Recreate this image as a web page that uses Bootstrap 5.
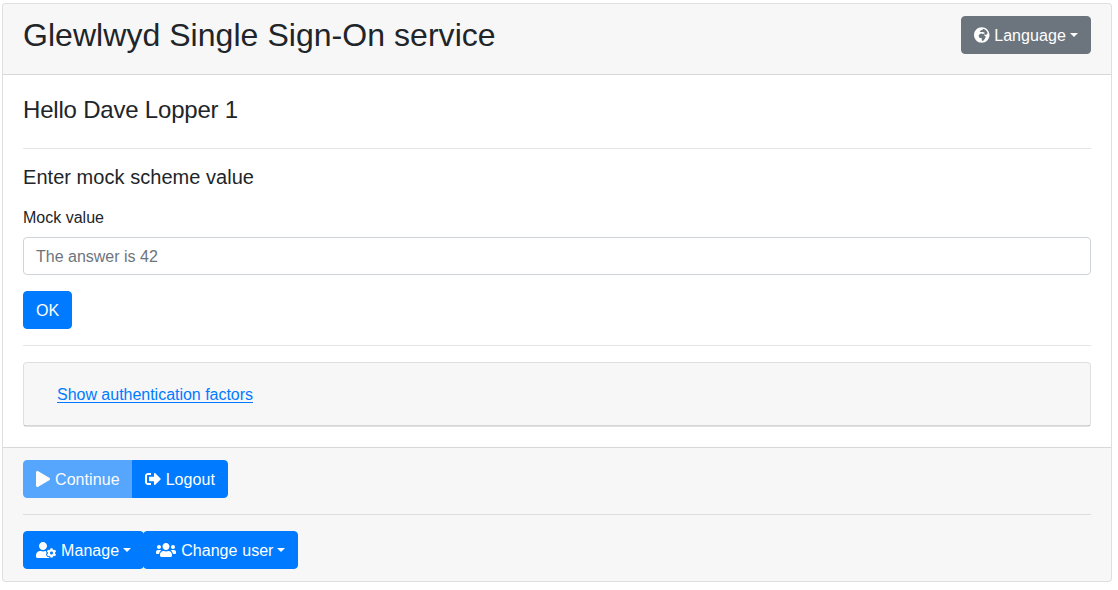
<!DOCTYPE html>
<html lang="en">
<head>
<meta charset="utf-8">
<meta name="viewport" content="width=device-width, initial-scale=1">
<title>Glewlwyd Single Sign-On service</title>
<link href="https://cdn.jsdelivr.net/npm/bootstrap@5.3.0/dist/css/bootstrap.min.css" rel="stylesheet">
<style>
body { font-family: "Liberation Sans", Arial, sans-serif; color: #212529; background: #fff; padding: 3px 6px 0 2px; }
.card { --bs-card-border-color: rgba(0,0,0,.125); --bs-card-border-radius: 4px; --bs-card-inner-border-radius: 3px; --bs-card-cap-bg: rgba(0,0,0,.03); --bs-card-cap-padding-x: 20px; --bs-card-cap-padding-y: 12px; --bs-card-spacer-x: 20px; --bs-card-spacer-y: 20px; }
h2 { font-size: 32px; letter-spacing: .045px; }
h4 { font-size: 24px; letter-spacing: -.2px; padding-top: 1px; margin-bottom: 23px; }
h5 { font-size: 20px; letter-spacing: .04px; }
hr { margin: 16px 0; border-top: 1px solid rgba(0,0,0,.1); opacity: 1; }
label { padding-top: 1px; margin-bottom: 7px; }
.btn { --bs-btn-border-radius: 4px; padding-top: 7px; padding-bottom: 5px; }
.icon-btn { letter-spacing: .07px; word-spacing: .5px; }
.user-btn { letter-spacing: 0; }
.btn-primary { --bs-btn-bg: #007bff; --bs-btn-border-color: #007bff; --bs-btn-hover-bg: #0069d9; --bs-btn-hover-border-color: #0062cc; --bs-btn-disabled-bg: #007bff; --bs-btn-disabled-border-color: #007bff; }
.btn-link { --bs-btn-color: #007bff; --bs-btn-hover-color: #0056b3; letter-spacing: -.02px; text-underline-offset: 2px; }
.form-control { border-color: #ced4da; border-radius: 4px; padding-top: 7px; padding-bottom: 5px; }
.form-control::placeholder { color: #6c757d; }
.glyph { height: 1em; vertical-align: -.125em; fill: currentColor; overflow: visible; }
.join-left { margin-left: -1px; }
</style>
<script src="https://cdn.jsdelivr.net/npm/bootstrap@5.3.0/dist/js/bootstrap.bundle.min.js"></script>
</head>
<body>
<main class="card">
  <header class="card-header d-flex justify-content-between align-items-start">
    <h2 class="mb-2">Glewlwyd Single Sign-On service</h2>
    <div class="dropdown">
      <button class="btn icon-btn btn-secondary dropdown-toggle" type="button" data-bs-toggle="dropdown"><svg class="glyph" viewBox="0 0 496 512" aria-hidden="true"><path d="M248 8C111.03 8 0 119.03 0 256s111.03 248 248 248 248-111.03 248-248S384.97 8 248 8zm160 215.5v6.93c0 5.87-3.32 11.24-8.57 13.86l-15.39 7.7a15.485 15.485 0 0 1-15.53-.97l-18.21-12.14a15.52 15.52 0 0 0-13.5-1.81l-2.65.88c-9.7 3.23-13.66 14.79-7.99 23.3l13.24 19.86c2.87 4.31 7.71 6.9 12.89 6.9h8.21c8.56 0 15.5 6.94 15.5 15.5v11.34c0 3.35-1.09 6.62-3.1 9.3l-18.74 24.98c-1.42 1.9-2.39 4.1-2.83 6.43l-4.3 22.83c-.62 3.29-2.29 6.29-4.76 8.56a159.608 159.608 0 0 0-25 29.16l-13.03 19.55a27.756 27.756 0 0 1-23.09 12.36c-10.51 0-20.12-5.94-24.82-15.34a78.902 78.902 0 0 1-8.33-35.29V367.5c0-8.56-6.94-15.5-15.5-15.5h-25.88c-14.49 0-28.38-5.76-38.63-16a54.659 54.659 0 0 1-16-38.63v-14.06c0-17.19 8.1-33.38 21.85-43.7l27.58-20.69a54.663 54.663 0 0 1 32.78-10.93h.89c8.48 0 16.85 1.97 24.43 5.77l14.72 7.36c3.68 1.84 7.93 2.14 11.83.84l47.31-15.77c6.33-2.11 10.6-8.03 10.6-14.7 0-8.56-6.94-15.5-15.5-15.5h-10.09c-4.11 0-8.05-1.63-10.96-4.54l-6.92-6.92a15.493 15.493 0 0 0-10.96-4.54H199.5c-8.56 0-15.5-6.94-15.5-15.5v-4.4c0-7.11 4.84-13.31 11.74-15.04l14.45-3.61c3.74-.94 7-3.23 9.14-6.44l8.08-12.11c2.87-4.31 7.71-6.9 12.89-6.9h24.21c8.56 0 15.5-6.94 15.5-15.5v-21.7C359.23 71.63 422.86 131.02 441.93 208H423.5c-8.56 0-15.5 6.94-15.5 15.5z"/></svg> Language</button>
    </div>
  </header>
  <div class="card-body">
    <h4>Hello Dave Lopper 1</h4>
    <hr>
    <h5 class="mb-3">Enter mock scheme value</h5>
    <form>
      <div class="mb-3">
        <label class="d-block" for="mock-value">Mock value</label>
        <input class="form-control" type="text" id="mock-value" placeholder="The answer is 42">
      </div>
      <button class="btn btn-primary d-block" type="button">OK</button>
    </form>
    <hr>
    <section class="card">
      <div class="card-header d-flex">
        <button class="btn btn-link" type="button">Show authentication factors</button>
      </div>
    </section>
  </div>
  <footer class="card-footer">
    <div class="btn-group d-flex">
      <button class="btn icon-btn btn-primary flex-grow-0 text-nowrap" type="button" disabled><svg class="glyph" viewBox="0 0 448 512" aria-hidden="true"><path d="M424.4 214.7L72.4 6.6C43.8-10.3 0 6.1 0 47.9V464c0 37.5 40.7 60.1 72.4 41.3l352-208c31.4-18.5 31.5-64.1 0-82.6z"/></svg> Continue</button>
      <button class="btn icon-btn btn-primary flex-grow-0 text-nowrap" type="button"><svg class="glyph" viewBox="0 0 512 512" aria-hidden="true"><path d="M497 273L329 441c-15 15-41 4.5-41-17v-96H152c-13.3 0-24-10.7-24-24v-96c0-13.3 10.7-24 24-24h136V88c0-21.4 25.9-32 41-17l168 168c9.3 9.4 9.3 24.6 0 34zM192 436v-40c0-6.6-5.4-12-12-12H96c-17.7 0-32-14.3-32-32V160c0-17.7 14.3-32 32-32h84c6.6 0 12-5.4 12-12V76c0-6.6-5.4-12-12-12H96c-53 0-96 43-96 96v192c0 53 43 96 96 96h84c6.6 0 12-5.4 12-12z"/></svg> Logout</button>
    </div>
    <hr>
    <div class="d-flex">
      <div class="dropdown">
        <button class="btn icon-btn btn-primary dropdown-toggle" type="button" data-bs-toggle="dropdown"><svg class="glyph" viewBox="0 0 640 512" aria-hidden="true"><path d="M610.5 373.3c2.6-14.1 2.6-28.5 0-42.6l25.8-14.9c3-1.7 4.3-5.2 3.3-8.5-6.7-21.6-18.2-41.2-33.2-57.4-2.3-2.5-6-3.1-9-1.4l-25.8 14.9c-10.9-9.3-23.4-16.5-36.9-21.3v-29.8c0-3.4-2.4-6.4-5.7-7.1-22.3-5-45-4.8-66.2 0-3.3.7-5.7 3.7-5.7 7.1v29.8c-13.5 4.8-26 12-36.9 21.3l-25.8-14.9c-2.9-1.7-6.7-1.1-9 1.4-15 16.2-26.5 35.8-33.2 57.4-1 3.3.4 6.8 3.3 8.5l25.8 14.9c-2.6 14.1-2.6 28.5 0 42.6l-25.8 14.9c-3 1.7-4.3 5.2-3.3 8.5 6.7 21.6 18.2 41.1 33.2 57.4 2.3 2.5 6 3.1 9 1.4l25.8-14.9c10.9 9.3 23.4 16.5 36.9 21.3v29.8c0 3.4 2.4 6.4 5.7 7.1 22.3 5 45 4.8 66.2 0 3.3-.7 5.7-3.7 5.7-7.1v-29.8c13.5-4.8 26-12 36.9-21.3l25.8 14.9c2.9 1.7 6.7 1.1 9-1.4 15-16.2 26.5-35.8 33.2-57.4 1-3.3-.4-6.8-3.3-8.5l-25.8-14.9zM496 400.5c-26.8 0-48.5-21.8-48.5-48.5s21.8-48.5 48.5-48.5 48.5 21.8 48.5 48.5-21.7 48.5-48.5 48.5zM224 256c70.7 0 128-57.3 128-128S294.7 0 224 0 96 57.3 96 128s57.3 128 128 128zm201.2 226.5c-2.3-1.2-4.6-2.6-6.8-3.9l-7.9 4.6c-6 3.4-12.8 5.3-19.6 5.3-10.9 0-21.4-4.6-28.9-12.6-18.3-19.8-32.3-43.9-40.2-69.6-5.5-17.7 1.9-36.4 17.9-45.7l7.9-4.6c-.1-2.6-.1-5.2 0-7.8l-7.9-4.6c-16-9.2-23.4-28-17.9-45.7.9-2.9 2.2-5.8 3.2-8.7-3.8-.3-7.5-1.2-11.4-1.2h-16.7c-22.2 10.2-46.9 16-72.9 16s-50.6-5.8-72.9-16h-16.7C60.2 288 0 348.2 0 422.4V464c0 26.5 21.5 48 48 48h352c10.1 0 19.5-3.2 27.2-8.5-1.2-3.8-2-7.7-2-11.8v-9.2z"/></svg> Manage</button>
      </div>
      <div class="dropdown join-left">
        <button class="btn icon-btn user-btn btn-primary dropdown-toggle" type="button" data-bs-toggle="dropdown"><svg class="glyph" viewBox="0 0 640 512" aria-hidden="true"><path d="M96 224c35.3 0 64-28.7 64-64s-28.7-64-64-64-64 28.7-64 64 28.7 64 64 64zm448 0c35.3 0 64-28.7 64-64s-28.7-64-64-64-64 28.7-64 64 28.7 64 64 64zm32 32h-64c-17.6 0-33.5 7.1-45.1 18.6 40.3 22.1 68.9 62 75.1 109.4h66c17.7 0 32-14.3 32-32v-32c0-35.3-28.7-64-64-64zm-256 0c61.9 0 112-50.1 112-112S381.9 32 320 32 208 82.1 208 144s50.1 112 112 112zm76.8 32h-8.3c-20.8 10-43.9 16-68.5 16s-47.6-6-68.5-16h-8.3C179.6 288 128 339.6 128 403.2V432c0 26.5 21.5 48 48 48h288c26.5 0 48-21.5 48-48v-28.8c0-63.6-51.6-115.2-115.2-115.2zm-223.7-13.4C161.5 263.1 145.6 256 128 256H64c-35.3 0-64 28.7-64 64v32c0 17.7 14.3 32 32 32h65.9c6.3-47.4 34.9-87.3 75.2-109.4z"/></svg> Change user</button>
      </div>
    </div>
  </footer>
</main>
</body>
</html>
